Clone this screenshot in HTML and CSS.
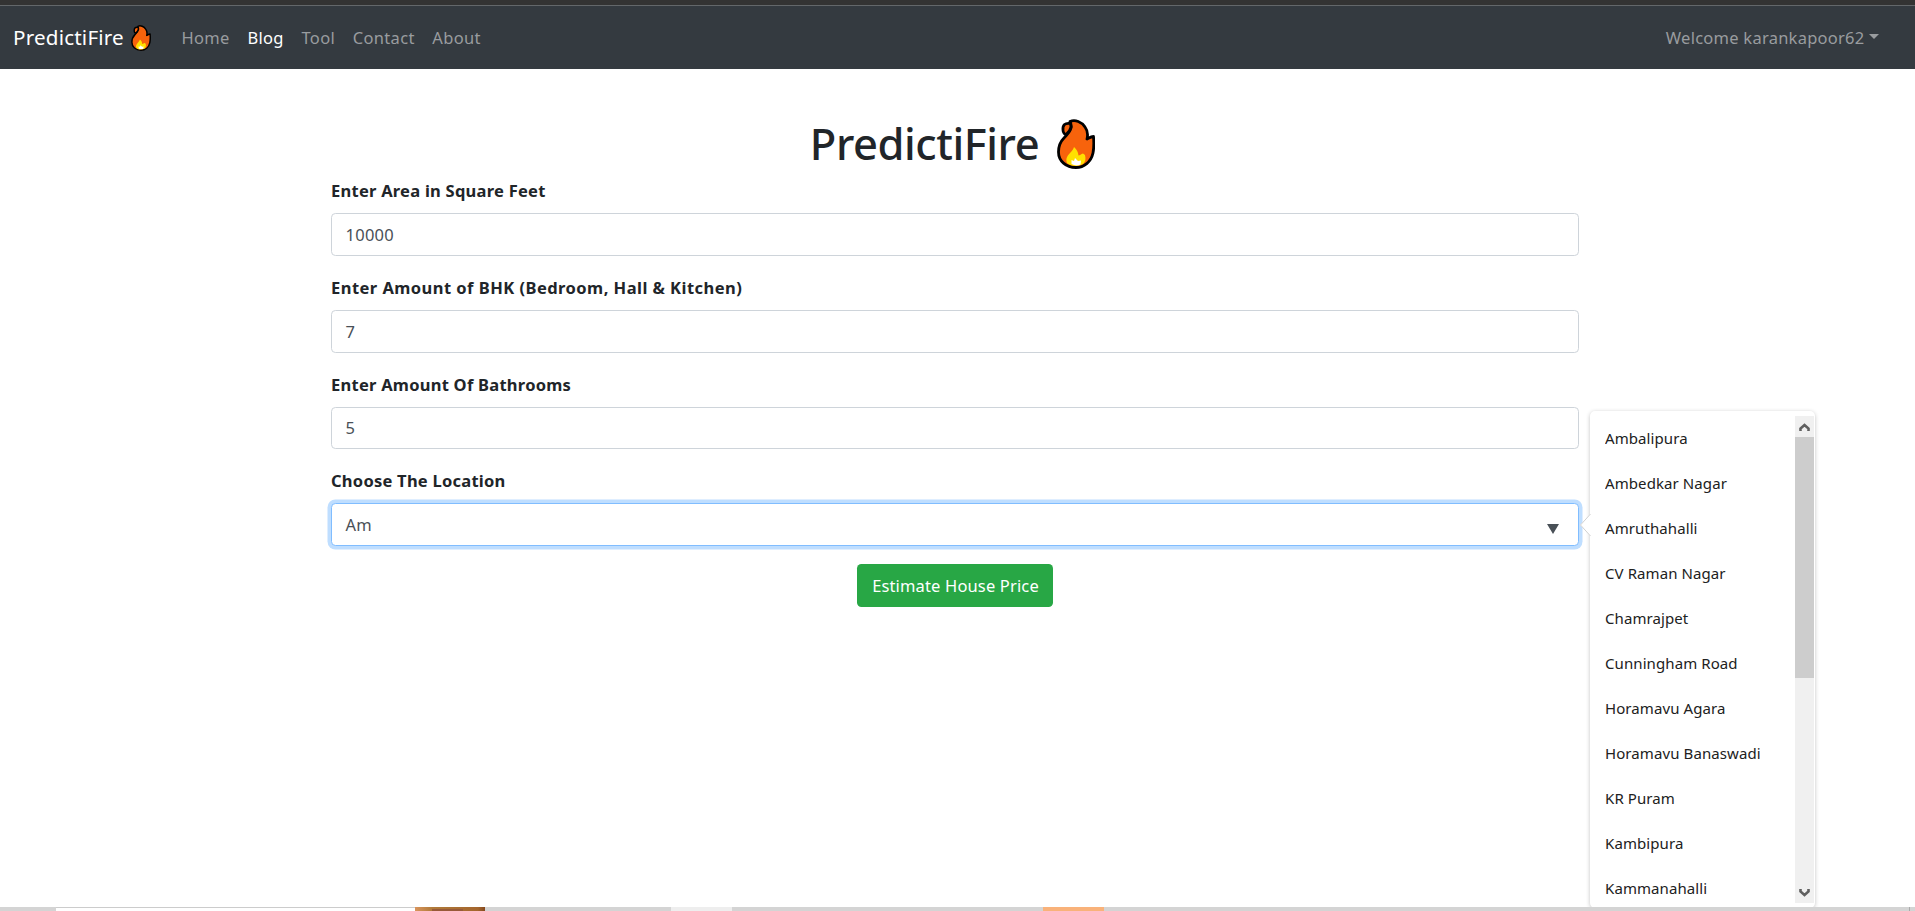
FILE: index.html
```
<!DOCTYPE html>
<html lang="en">
<head>
<meta charset="utf-8">
<title>PredictiFire</title>
<link rel="stylesheet" href="styles.css">
</head>
<body>
<svg width="0" height="0" class="defs" aria-hidden="true">
  <symbol id="flame" viewBox="0 0 38 50">
    <path d="M13 2.500 C18 0 25 3 28 8 C31 12 31 16 30 20 C32 19 34 17.500 36.500 17.500 C37 24 37 29 36 34 C34 43 27 48.500 19 48.500 C9 48.500 1.500 42 1.500 33 C1.500 27 3 23 7 19 C10 16 13 13 14 9 C14.500 6.500 14 4.500 13 2.500Z" fill="#f7630c" stroke="#000" stroke-width="2.800" stroke-linejoin="round"/>
    <path d="M13.500 4.500 C8 3.500 5.500 6 6 11 C6 14 8 15.500 9 15.500 C11.500 13.500 13.500 11 14 8Z" fill="#f7630c" stroke="#000" stroke-width="2.800" stroke-linejoin="round"/>
    <path d="M17 28 C20 31 21 33 21.500 36.500 C23 36.500 24 35 26 34.500 L28 36 C29 40 28.500 43 26 45 C21 48 14 47.500 10 44 C8.500 40 10 37 13 34 C15 32 16.500 30 17 28Z" fill="#ffe000"/>
    <path d="M18 39 L21 42 L24 41.500 L23.500 45.500 Q19 47.500 14.500 45 L14.500 41 L17 42Z" fill="#fff"/>
  </symbol>
</svg>
<div class="top-edge"></div>
<nav class="navbar">
  <a class="brand">PredictiFire<svg class="brand-flame"><use href="#flame"/></svg></a>
  <div class="nav-links"><a>Home</a><a class="active">Blog</a><a>Tool</a><a>Contact</a><a>About</a></div>
  <a class="user">Welcome karankapoor62<i class="caret"></i></a>
</nav>
<main class="container">
  <h1><span class="title-text">PredictiFire</span><svg class="title-flame"><use href="#flame"/></svg></h1>
  <div class="group"><label>Enter Area in Square Feet</label><div class="field">10000</div></div>
  <div class="group"><label class="wide">Enter Amount of BHK (Bedroom, Hall &amp; Kitchen)</label><div class="field">7</div></div>
  <div class="group"><label>Enter Amount Of Bathrooms</label><div class="field short">5</div></div>
  <div class="group">
    <label>Choose The Location</label>
    <div class="field focus">Am<svg class="picker" viewBox="0 0 12 10"><path d="M0 0H12L6 10Z"/></svg></div>
  </div>
  <button class="submit">Estimate House Price</button>
</main>
<div class="popup">
  <svg class="notch" viewBox="0 0 11 24"><path d="M11 0V24L0 12Z" fill="#fff"/><path d="M10.500 1L0.500 12L10.500 23" fill="none" stroke="#d0d0d0"/></svg>
  <ul class="options"><li>Ambalipura</li><li>Ambedkar Nagar</li><li>Amruthahalli</li><li>CV Raman Nagar</li><li>Chamrajpet</li><li>Cunningham Road</li><li>Horamavu Agara</li><li>Horamavu Banaswadi</li><li>KR Puram</li><li>Kambipura</li><li>Kammanahalli</li></ul>
  <div class="scrollbar">
    <svg class="arrow" viewBox="0 0 19 21"><path d="M5.500 15V12.500L9.500 9L13.500 12.500V15" /></svg>
    <div class="thumb"></div>
    <svg class="arrow down" viewBox="0 0 19 21"><path d="M5.500 7V9.500L9.500 13L13.500 9.500V7" /></svg>
  </div>
</div>
<footer class="strip">
  <div class="search"></div>
  <div class="art"><i></i></div>
  <div class="app"></div>
  <div class="alert"></div>
  <div class="show-desktop"></div>
</footer>
</body>
</html>
```
FILE: styles.css
```
*{box-sizing:border-box}
body{margin:0;height:911px;overflow:hidden;position:relative;display:flex;flex-direction:column;background:#fff;font-family:"Noto Sans","Open Sans",sans-serif;font-size:16.5px;line-height:27px;letter-spacing:.25px;color:#212529}
.defs{position:absolute}
.top-edge{flex:none;height:6px;background:#333;border-bottom:1px solid #63676a}
.navbar{flex:none;display:flex;align-items:center;height:63px;padding:0 36px 0 13px;background:#343a40;color:#999c9f}
.brand{display:flex;align-items:center;width:168.500px;font-size:20.6px;letter-spacing:.2px;color:#fff}
.brand-flame{width:20px;height:26px;margin-left:7px}
.nav-links{display:flex;gap:17.7px;letter-spacing:.32px}
.nav-links .active{color:#fff}
.user{display:flex;align-items:center;margin-left:auto}
.caret{margin:-3px 0 0 4.500px;border:5.300px solid transparent;border-top-color:currentColor;border-bottom:0}
.container{display:flex;flex-direction:column;width:1248px;margin:42px 0 0 331px}
h1{display:flex;align-items:center;justify-content:center;height:66px;margin:0;font-size:43.5px;font-weight:500;letter-spacing:-.45px;line-height:66px}
.title-text{margin-bottom:2px}
.title-flame{width:38px;height:50px;margin:0 5px 0 18px}
.group{margin-bottom:17.8px}
label{display:block;margin-bottom:9px;font-weight:700}
.wide{letter-spacing:.46px}
.field{display:flex;align-items:center;height:43px;padding:0 20px 0 13.500px;border:1px solid #ced4da;border-radius:4.400px;background:#fff;color:#495057}
.short{height:42.400px}
.focus{border-color:#80bdff;box-shadow:0 0 0 3.500px #bfdeff}
.picker{width:12px;height:10px;margin:9px -1px 0 auto;fill:#495057}
.submit{align-self:center;width:196px;height:43px;padding:0 0 0 1px;border:0;border-radius:4.400px;background:#28a745;color:#fff;font:inherit;letter-spacing:.15px}
.popup{position:absolute;left:1590px;top:411px;display:flex;width:225px;height:497px;padding:5px 1px 4px 15px;border-radius:5px;background:#fff;box-shadow:0 1px 4px rgba(0,0,0,.24)}
.notch{position:absolute;left:-10.500px;top:102px;width:11px;height:24px}
.options{flex:1;margin:0;padding:0;overflow:hidden;list-style:none;font-size:15px;line-height:45px;letter-spacing:.09px;color:#212121;white-space:nowrap}
.options li{height:45px}
.scrollbar{display:flex;flex-direction:column;width:19px;height:487px;background:#f0f0f0}
.arrow{width:19px;height:21px;fill:none;stroke:#606060;stroke-width:2.600}
.thumb{height:241px;background:#cdcdcd}
.down{margin-top:auto}
.strip{position:absolute;left:0;right:0;bottom:0;display:flex;height:4px;background:#d4d4d4}
.search{width:359px;margin-left:56px;border-top:1px solid #ccc;background:#fff}
.art{width:70px;padding:2px 0 0 17px;background:linear-gradient(90deg,#d9945c,#b07a3a 25%,#a4662d 90%,#84491e)}
.art i{display:block;width:31px;height:2px;background:#985a38}
.app{width:61px;margin-left:186px;background:#eee}
.alert{width:61px;margin-left:311px;background:#f9b27a}
.show-desktop{width:6px;margin-left:auto;border-left:1px solid #aaa}
```
